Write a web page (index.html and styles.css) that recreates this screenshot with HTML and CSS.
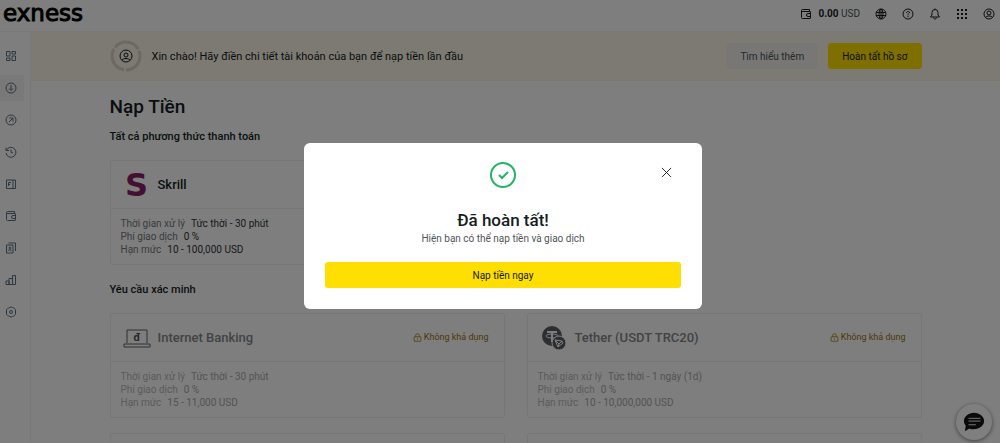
FILE: index.html
```html
<!DOCTYPE html>
<html lang="vi">
<head>
<meta charset="utf-8">
<meta name="viewport" content="width=device-width, initial-scale=1">
<title>Nạp Tiền</title>
<link rel="stylesheet" href="styles.css">
</head>
<body>
<svg class="defs" aria-hidden="true">
  <symbol id="user" viewBox="0 0 24 24"><circle cx="12" cy="12" r="10"/><circle cx="12" cy="10" r="4"/><path d="M5 19c2-4 12-4 14 0"/></symbol>
  <symbol id="wallet" viewBox="0 0 24 24"><path d="M19 7V3H5a2 2 0 0 0-2 2v14a2 2 0 0 0 2 2h15a1 1 0 0 0 1-1V8a1 1 0 0 0-1-1H4"/><path d="M21 11h-5a3 3 0 0 0 0 6h5z"/></symbol>
  <symbol id="lock" viewBox="0 0 24 24"><rect x="3" y="10" width="18" height="12" rx="1"/><path d="M7 10V7a5 5 0 0 1 10 0v3M12 14v4"/></symbol>
</svg>

<header class="topbar">
  <a class="logo" href="#">exness</a>
  <div class="tools">
    <button class="balance"><svg class="icon"><use href="#wallet"/></svg><span><b>0.00</b> USD</span></button>
    <button class="tool" aria-label="Ngôn ngữ"><svg class="icon" viewBox="0 0 24 24"><circle cx="12" cy="12" r="10"/><ellipse cx="12" cy="12" rx="4" ry="10"/><path d="M12 2v20M2 9h20M2 15h20"/></svg></button>
    <button class="tool" aria-label="Trợ giúp"><svg class="icon" viewBox="0 0 24 24"><circle cx="12" cy="12" r="10"/><path d="M9 10c0-4 6-4 6-1 0 2-3 2-3 4M12 15v3"/></svg></button>
    <button class="tool" aria-label="Thông báo"><svg class="icon" viewBox="0 0 24 24"><path d="M3 18h18l-3-4V9A6 6 0 0 0 6 9v5zM12 1v2M9 19c0 4 6 4 6 0"/></svg></button>
    <button class="tool" aria-label="Ứng dụng"><svg class="icon solid" viewBox="0 0 24 24"><path d="M2 2h4v4H2zM10 2h4v4h-4zM18 2h4v4h-4zM2 10h4v4H2zM10 10h4v4h-4zM18 10h4v4h-4zM2 18h4v4H2zM10 18h4v4h-4zM18 18h4v4h-4z"/></svg></button>
    <button class="tool" aria-label="Tài khoản"><svg class="icon"><use href="#user"/></svg></button>
  </div>
</header>

<div class="shell">
  <nav class="sidebar" aria-label="Menu">
    <a href="#" aria-label="Tổng quan"><svg class="icon" viewBox="0 0 24 24"><path d="M3 3h7v9H3zM14 3h7v5h-7zM14 12h7v9h-7zM3 16h7v5H3z"/></svg></a>
    <a href="#" class="active" aria-label="Nạp tiền"><svg class="icon" viewBox="0 0 24 24"><circle cx="12" cy="12" r="10"/><path d="M12 6v10M8 13l4 4 4-4"/></svg></a>
    <a href="#" aria-label="Rút tiền"><svg class="icon" viewBox="0 0 24 24"><circle cx="12" cy="12" r="10"/><path d="M8 16l7-7M9 8h7v7"/></svg></a>
    <a href="#" aria-label="Lịch sử"><svg class="icon" viewBox="0 0 24 24"><path d="M3 8a10 10 0 1 1-1 6M2 3v6h6M12 7v6l4 1"/></svg></a>
    <a href="#" aria-label="Lệnh"><svg class="icon" viewBox="0 0 24 24"><path d="M3 4h13v17H3zM16 4h5v17h-5M7 9h5M7 13h3M7 9v7"/></svg></a>
    <a href="#" aria-label="Ví"><svg class="icon"><use href="#wallet"/></svg></a>
    <a href="#" aria-label="Giới thiệu"><svg class="icon" viewBox="0 0 24 24"><path d="M3 6h13v16H3zM7 2h14v16"/><circle cx="10" cy="12" r="2"/><path d="M6 18c1-3 6-3 7 0"/></svg></a>
    <a href="#" aria-label="Phân tích"><svg class="icon" viewBox="0 0 24 24"><path d="M2 14h6v7H2zM8 9h7v12H8zM15 3h6v18h-6z"/></svg></a>
    <a href="#" aria-label="Cài đặt"><svg class="icon" viewBox="0 0 24 24"><path d="M9 3q3-2 6 0l4 2q3 2 2 5v4q1 3-2 5l-4 2q-3 2-6 0l-4-2q-3-2-2-5v-4q-1-3 2-5z"/><circle cx="12" cy="12" r="3"/></svg></a>
  </nav>

  <main class="main">
    <section class="banner">
      <div class="container banner-row">
        <div class="ring"><svg class="ring-art" viewBox="0 0 32 32"><circle class="ring-track" cx="16" cy="16" r="14"/><g class="ring-user"><circle cx="16" cy="16" r="6"/><circle cx="16" cy="15" r="2"/><path d="M12 20c2-2 6-2 8 0"/></g></svg></div>
        <p class="banner-text">Xin chào! Hãy điền chi tiết tài khoản của bạn để nạp tiền lần đầu</p>
        <button class="btn muted">Tìm hiểu thêm</button>
        <button class="btn primary">Hoàn tất hồ sơ</button>
      </div>
    </section>

    <div class="container content">
      <h1>Nạp Tiền</h1>
      <h2>Tất cả phương thức thanh toán</h2>
      <div class="cards">
        <article class="card">
          <header><span class="brand skrill" aria-hidden="true">S</span><h3>Skrill</h3></header>
          <dl>
            <div><dt>Thời gian xử lý</dt><dd>Tức thời - 30 phút</dd></div>
            <div><dt>Phí giao dịch</dt><dd>0 %</dd></div>
            <div><dt>Hạn mức</dt><dd>10 - 100,000 USD</dd></div>
          </dl>
        </article>
      </div>

      <h2>Yêu cầu xác minh</h2>
      <div class="cards">
        <article class="card off">
          <header>
            <svg class="brand" viewBox="0 0 28 28"><path class="line" d="M4 19V6h20v13M1 20h26v3H1z"/><text class="dong" x="14" y="17">đ</text></svg>
            <h3>Internet Banking</h3>
            <span class="status"><svg class="icon"><use href="#lock"/></svg>Không khả dụng</span>
          </header>
          <dl>
            <div><dt>Thời gian xử lý</dt><dd>Tức thời - 30 phút</dd></div>
            <div><dt>Phí giao dịch</dt><dd>0 %</dd></div>
            <div><dt>Hạn mức</dt><dd>15 - 11,000 USD</dd></div>
          </dl>
        </article>
        <article class="card off">
          <header>
            <svg class="brand" viewBox="0 0 28 28"><circle class="coin" cx="12" cy="12" r="10"/><path class="mark" d="M7 8h10M12 8v10"/><ellipse class="mark-thin" cx="12" cy="12" rx="6" ry="2"/><circle class="coin cut" cx="19" cy="19" r="7"/><path class="mark-thin" d="M15 16l7 1 1 2-5 4zM15 16l4 4 3-3M19 20l-1 3"/></svg>
            <h3>Tether (USDT TRC20)</h3>
            <span class="status"><svg class="icon"><use href="#lock"/></svg>Không khả dụng</span>
          </header>
          <dl>
            <div><dt>Thời gian xử lý</dt><dd>Tức thời - 1 ngày (1d)</dd></div>
            <div><dt>Phí giao dịch</dt><dd>0 %</dd></div>
            <div><dt>Hạn mức</dt><dd>10 - 10,000,000 USD</dd></div>
          </dl>
        </article>
        <article class="card off"></article>
        <article class="card off"></article>
      </div>
    </div>
  </main>
</div>

<button class="chat" aria-label="Trò chuyện"><svg viewBox="0 0 24 24"><path class="bubble" d="M12 2c6 0 11 4 11 9s-5 9-11 9c-2 0-4 0-5-1l-5 3 1-6c-1-1-2-3-2-5 0-5 5-9 11-9z"/><path class="bubble-lines" d="M6 8h13M6 11h13M6 15h8"/></svg></button>

<div class="overlay">
  <div class="modal" role="dialog" aria-modal="true" aria-labelledby="done-title">
    <button class="close" aria-label="Đóng"><svg viewBox="0 0 12 12"><path d="M1 1l10 10M11 1L1 11"/></svg></button>
    <svg class="success" viewBox="0 0 28 28"><circle cx="14" cy="14" r="12"/><path d="M10 14l3 3 6-6"/></svg>
    <h2 id="done-title">Đã hoàn tất!</h2>
    <p>Hiện bạn có thể nạp tiền và giao dịch</p>
    <button class="btn primary wide">Nạp tiền ngay</button>
  </div>
</div>
</body>
</html>
```

FILE: styles.css
```css
* { box-sizing: border-box; margin: 0; }

body {
  display: flex;
  flex-direction: column;
  height: 100vh;
  overflow: hidden;
  background: #fdfdfd;
  color: #141d22;
  font: 10px/13px Roboto, "Noto Sans", sans-serif;
}

button { border: 0; background: none; padding: 0; color: inherit; font: inherit; }
a { color: inherit; text-decoration: none; }
h1, h2, h3 { font-weight: 500; }

.defs { position: absolute; width: 0; height: 0; }

.icon {
  display: block;
  width: 12px;
  height: 12px;
  fill: none;
  stroke: currentColor;
  stroke-width: 2;
}
.icon.solid { fill: currentColor; stroke: none; }

/* Top bar */
.topbar {
  display: flex;
  flex: none;
  align-items: center;
  justify-content: space-between;
  height: 32px;
  padding: 0 5px 4px 3px;
  border-bottom: 1px solid #f0f0f2;
}
.logo {
  padding-bottom: 2px;
  color: #000;
  font: 23px/26px "DejaVu Sans", sans-serif;
  -webkit-text-stroke: 1px #000;
}
.tools { display: flex; align-items: center; gap: 15px; }
.tool .icon, .balance .icon { stroke-width: 2; }
.balance { display: flex; align-items: center; gap: 6px; color: #4a5257; }
.balance b { color: #141d22; font-weight: 700; }
.balance .icon { color: #141d22; }

/* Sidebar */
.shell { display: flex; flex: 1; min-height: 0; }
.sidebar {
  display: flex;
  flex: none;
  flex-direction: column;
  gap: 6px;
  width: 31px;
  padding-top: 11px;
  border-right: 1px solid #eef0f4;
  color: #5a7184;
}
.sidebar a { display: flex; align-items: center; width: 24px; height: 26px; padding-left: 5px; }
.sidebar .active { background: #f2f2f4; }

.main { flex: 1; min-width: 0; overflow: hidden; }
.container { max-width: 812px; margin: 0 auto; }

/* Banner */
.banner { background: #fbf3e6; border-bottom: 1px solid #f5efd8; }
.banner-row { display: flex; align-items: center; gap: 10px; height: 48px; }
.ring { width: 32px; height: 32px; }
.ring-art { display: block; fill: none; }
.ring-track { stroke: #d8d3ca; stroke-width: 3; stroke-dasharray: 27 2; stroke-dashoffset: 5; }
.ring-user { stroke: #141d22; stroke-width: 1; }
.banner-text { flex: 1; font-size: 11px; }
.btn { height: 26px; padding: 0 14px; border-radius: 3px; }
.primary { background: #ffde02; }
.muted { background: #f0eeeb; color: #4a5257; }

/* Payment methods */
.content { padding-top: 13px; }
h1 { font-size: 19px; line-height: 26px; }
.content h2 { margin: 10px 0 16px; font-size: 11px; line-height: 14px; }
.cards { display: grid; grid-template-columns: 1fr 1fr; gap: 15px 22px; }
.content .cards + h2 { margin-top: 18px; }
.card { min-height: 105px; border: 1px solid #ececef; border-radius: 3px; }
.card header {
  display: flex;
  align-items: center;
  gap: 7px;
  height: 48px;
  padding: 0 15px 0 12px;
  border-bottom: 1px solid #ececef;
}
.card h3 { flex: 1; font-size: 13px; line-height: 18px; }
.card dl { padding: 8px 10px; }
.card dl div { display: flex; gap: 6px; }
.card dt { color: #73797d; }
.card dd { color: #2b3338; }
.brand { width: 28px; height: 28px; }
.skrill {
  color: #862165;
  font: bold 32px/28px "DejaVu Sans", sans-serif;
  text-align: center;
}
.line { fill: none; stroke: #141d22; stroke-width: 1; }
.dong { font: bold 11px Roboto, sans-serif; text-anchor: middle; }
.coin { fill: #141d22; }
.cut { stroke: #fdfdfd; }
.mark { stroke: #fdfdfd; stroke-width: 2; }
.mark-thin { fill: none; stroke: #fdfdfd; stroke-width: 1; }
.off .brand { opacity: 0.7; }
.off h3 { color: #82878a; }
.off dt { color: #b4b7b9; }
.off dd { color: #a4a8aa; }
.status { display: flex; align-items: center; gap: 2px; color: #98700f; font-size: 9px; }
.status .icon { width: 9px; height: 9px; }

/* Chat launcher */
.chat {
  position: fixed;
  right: 8px;
  bottom: 3px;
  display: grid;
  place-items: center;
  width: 36px;
  height: 36px;
  border-radius: 50%;
  background: #fff;
  box-shadow: 0 1px 4px rgba(0, 0, 0, 0.5);
}
.chat svg { width: 22px; height: 22px; }
.bubble { fill: #141414; }
.bubble-lines { stroke: #fff; stroke-width: 1; }

/* Dialog */
.overlay {
  position: fixed;
  inset: 0;
  display: grid;
  place-items: center;
  padding: 9px 0 0 6px;
  background: rgba(0, 0, 0, 0.5);
}
.modal {
  position: relative;
  display: flex;
  flex-direction: column;
  align-items: center;
  width: 100%;
  max-width: 398px;
  padding: 18px 21px 21px;
  border-radius: 6px;
  background: #fff;
}
.success { width: 28px; height: 28px; fill: none; stroke: #24b364; stroke-width: 2; }
.modal h2 { margin-top: 21px; font-size: 17px; line-height: 20px; }
.modal p { margin-top: 2px; color: #4f565a; line-height: 14px; }
.wide { width: 100%; margin-top: 16px; }
.close { position: absolute; top: 24px; right: 30px; width: 11px; height: 11px; }
.close svg { display: block; stroke: #141d22; stroke-width: 1; }
```
